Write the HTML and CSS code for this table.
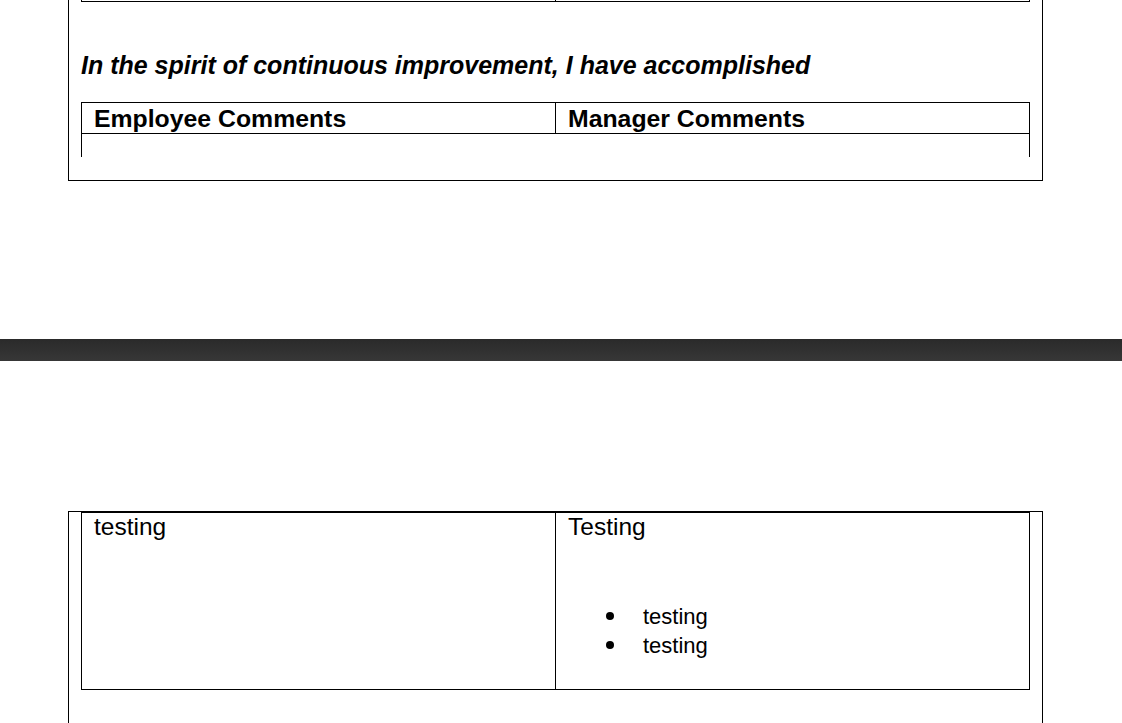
FILE: index.html
```html
<!DOCTYPE html>
<html lang="en">
<head>
<meta charset="utf-8">
<title>Review</title>
<link rel="stylesheet" href="styles.css">
</head>
<body>
  <section class="sheet sheet-top">
    <div class="table stub">
      <div class="cell"></div>
      <div class="cell"></div>
    </div>
    <h2 class="heading">In the spirit of continuous improvement, I have accomplished</h2>
    <div class="table head">
      <div class="cell th">Employee Comments</div>
      <div class="cell th">Manager Comments</div>
    </div>
    <div class="cont"></div>
  </section>

  <div class="divider-bar"></div>

  <section class="sheet sheet-bottom">
    <div class="table body-row">
      <div class="cell td">testing</div>
      <div class="cell td">
        <p class="para">Testing</p>
        <ul class="bullets">
          <li>testing</li>
          <li>testing</li>
        </ul>
      </div>
    </div>
  </section>
</body>
</html>
```
FILE: styles.css
```css
html, body {
  margin: 0;
  padding: 0;
  background: #fff;
}
body {
  font-family: "Liberation Sans", Arial, sans-serif;
  color: #000;
  height: 723px;
  overflow: hidden;
}

.sheet {
  margin-left: 68px;
  border-left: 1px solid #000;
  border-right: 1px solid #000;
  padding: 0 12px;
  box-sizing: content-box;
  width: 949px;
}
.sheet-top {
  border-bottom: 1px solid #000;
  padding-bottom: 23px;
}

.table {
  display: grid;
  grid-template-columns: 473px 474px;
  border-left: 1px solid #000;
  border-right: 1px solid #000;
}
.cell + .cell {
  border-left: 1px solid #000;
}

.stub {
  height: 1px;
  border-bottom: 1px solid #000;
}

.heading {
  margin: 49px 0 23px;
  font-size: 25px;
  line-height: 28px;
  font-weight: bold;
  font-style: italic;
}

.head {
  border-top: 1px solid #000;
  border-bottom: 1px solid #000;
}
.th {
  font-size: 24.8px;
  font-weight: bold;
  line-height: 28px;
  padding: 2px 12px 0;
}

.cont {
  height: 23px;
  border-left: 1px solid #000;
  border-right: 1px solid #000;
}

.divider-bar {
  margin-top: 158px;
  height: 22px;
  background: linear-gradient(#2a2a2a, #373737);
}

.sheet-bottom {
  margin-top: 150px;
  border-top: 1px solid #000;
  height: 300px;
}

.body-row {
  border-top: 1px solid #000;
  border-bottom: 1px solid #000;
  height: 176px;
}
.td {
  font-size: 24.5px;
  line-height: 28px;
  padding: 0 12px;
}
.para {
  margin: 0;
}
.bullets {
  list-style: none;
  margin: 61px 0 0;
  padding: 0;
}
.bullets li {
  display: flex;
  font-size: 22px;
  line-height: 29px;
}
.bullets li::before {
  content: "";
  width: 8px;
  height: 8px;
  border-radius: 50%;
  background: #000;
  margin: 10px 29px 0 38px;
  flex: none;
}
```
